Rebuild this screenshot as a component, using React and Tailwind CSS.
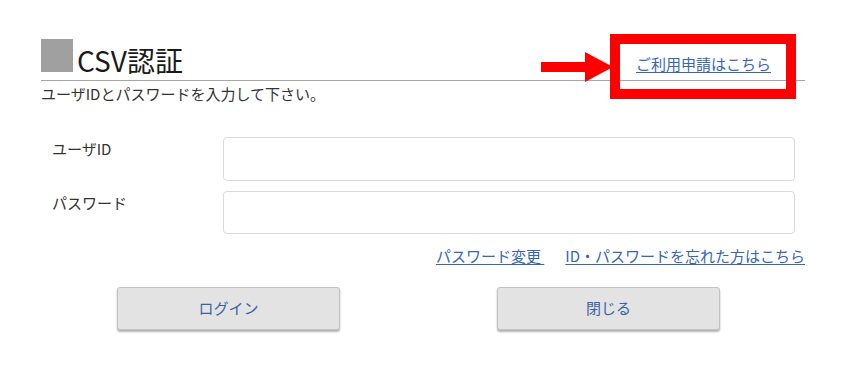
import React from "react";

export default function App() {
  return (
    <div
      className="relative w-[843px] h-[371px] bg-white overflow-hidden"
      style={{ fontFamily: '"Noto Sans CJK JP", "Noto Sans", sans-serif' }}
    >
      <div className="ml-[41px] mr-[38px] pt-[39px]">
        {/* Header */}
        <div className="flex items-end justify-between h-[42px] border-b border-[#a6a6a6]">
          <div className="flex items-end">
            <div className="w-[32px] h-[33px] bg-[#a0a0a0] mb-[8px]" />
            <h1 className="ml-[4px] mb-[6px] text-[28px] leading-none text-[#1a1a1a] font-normal">
              CSV認証
            </h1>
          </div>
          <a
            href="#"
            className="mr-[34px] mb-[9px] text-[15px] leading-none text-[#3566b8] underline underline-offset-2"
          >
            ご利用申請はこちら
          </a>
        </div>
        <p className="mt-[5px] text-[15px] leading-[15px] text-[#333333]">
          ユーザIDとパスワードを入力して下さい。
        </p>

        {/* Form */}
        <div className="mt-[36px] flex flex-col gap-[10px]">
          <div className="flex">
            <div className="w-[182px] pl-[11px] pt-[4px] text-[15px] leading-[15px] text-[#333333]">
              ユーザID
            </div>
            <input
              type="text"
              className="w-[572px] h-[44px] border border-[#dadada] rounded-[4px] bg-white outline-none"
            />
          </div>
          <div className="flex">
            <div className="w-[182px] pl-[11px] pt-[4px] text-[15px] leading-[15px] text-[#333333]">
              パスワード
            </div>
            <input
              type="password"
              className="w-[572px] h-[43px] border border-[#dadada] rounded-[4px] bg-white outline-none"
            />
          </div>
        </div>

        {/* Links */}
        <div className="mt-[14px] flex justify-end gap-[21px] text-[15px] leading-[15px] text-[#3566b8]">
          <a href="#" className="underline underline-offset-2">
            パスワード変更{"\u00a0"}
          </a>
          <a href="#" className="underline underline-offset-2">
            ID・パスワードを忘れた方はこちら
          </a>
        </div>

        {/* Buttons */}
        <div className="mt-[24px] flex pl-[76px] gap-[157px]">
          <button className="w-[223px] h-[43px] bg-[#e3e3e3] border border-[#c2c2c2] rounded-[3px] shadow-[0_2px_2px_rgba(0,0,0,0.3)] text-[15px] text-[#3c62a6]">
            ログイン
          </button>
          <button className="w-[223px] h-[43px] bg-[#e3e3e3] border border-[#c2c2c2] rounded-[3px] shadow-[0_2px_2px_rgba(0,0,0,0.3)] text-[15px] text-[#3c62a6]">
            閉じる
          </button>
        </div>
      </div>

      {/* Annotation overlay: arrow + red box */}
      <svg
        className="absolute left-[540px] top-[51px]"
        width="74"
        height="32"
        viewBox="0 0 74 32"
      >
        <rect x="1" y="11" width="46" height="10" fill="#ff0000" />
        <polygon points="45,1 73,16 45,31" fill="#ff0000" />
      </svg>
      <div className="absolute left-[610px] top-[34px] w-[186px] h-[65px] border-[10px] border-[#ff0000]" />
    </div>
  );
}
